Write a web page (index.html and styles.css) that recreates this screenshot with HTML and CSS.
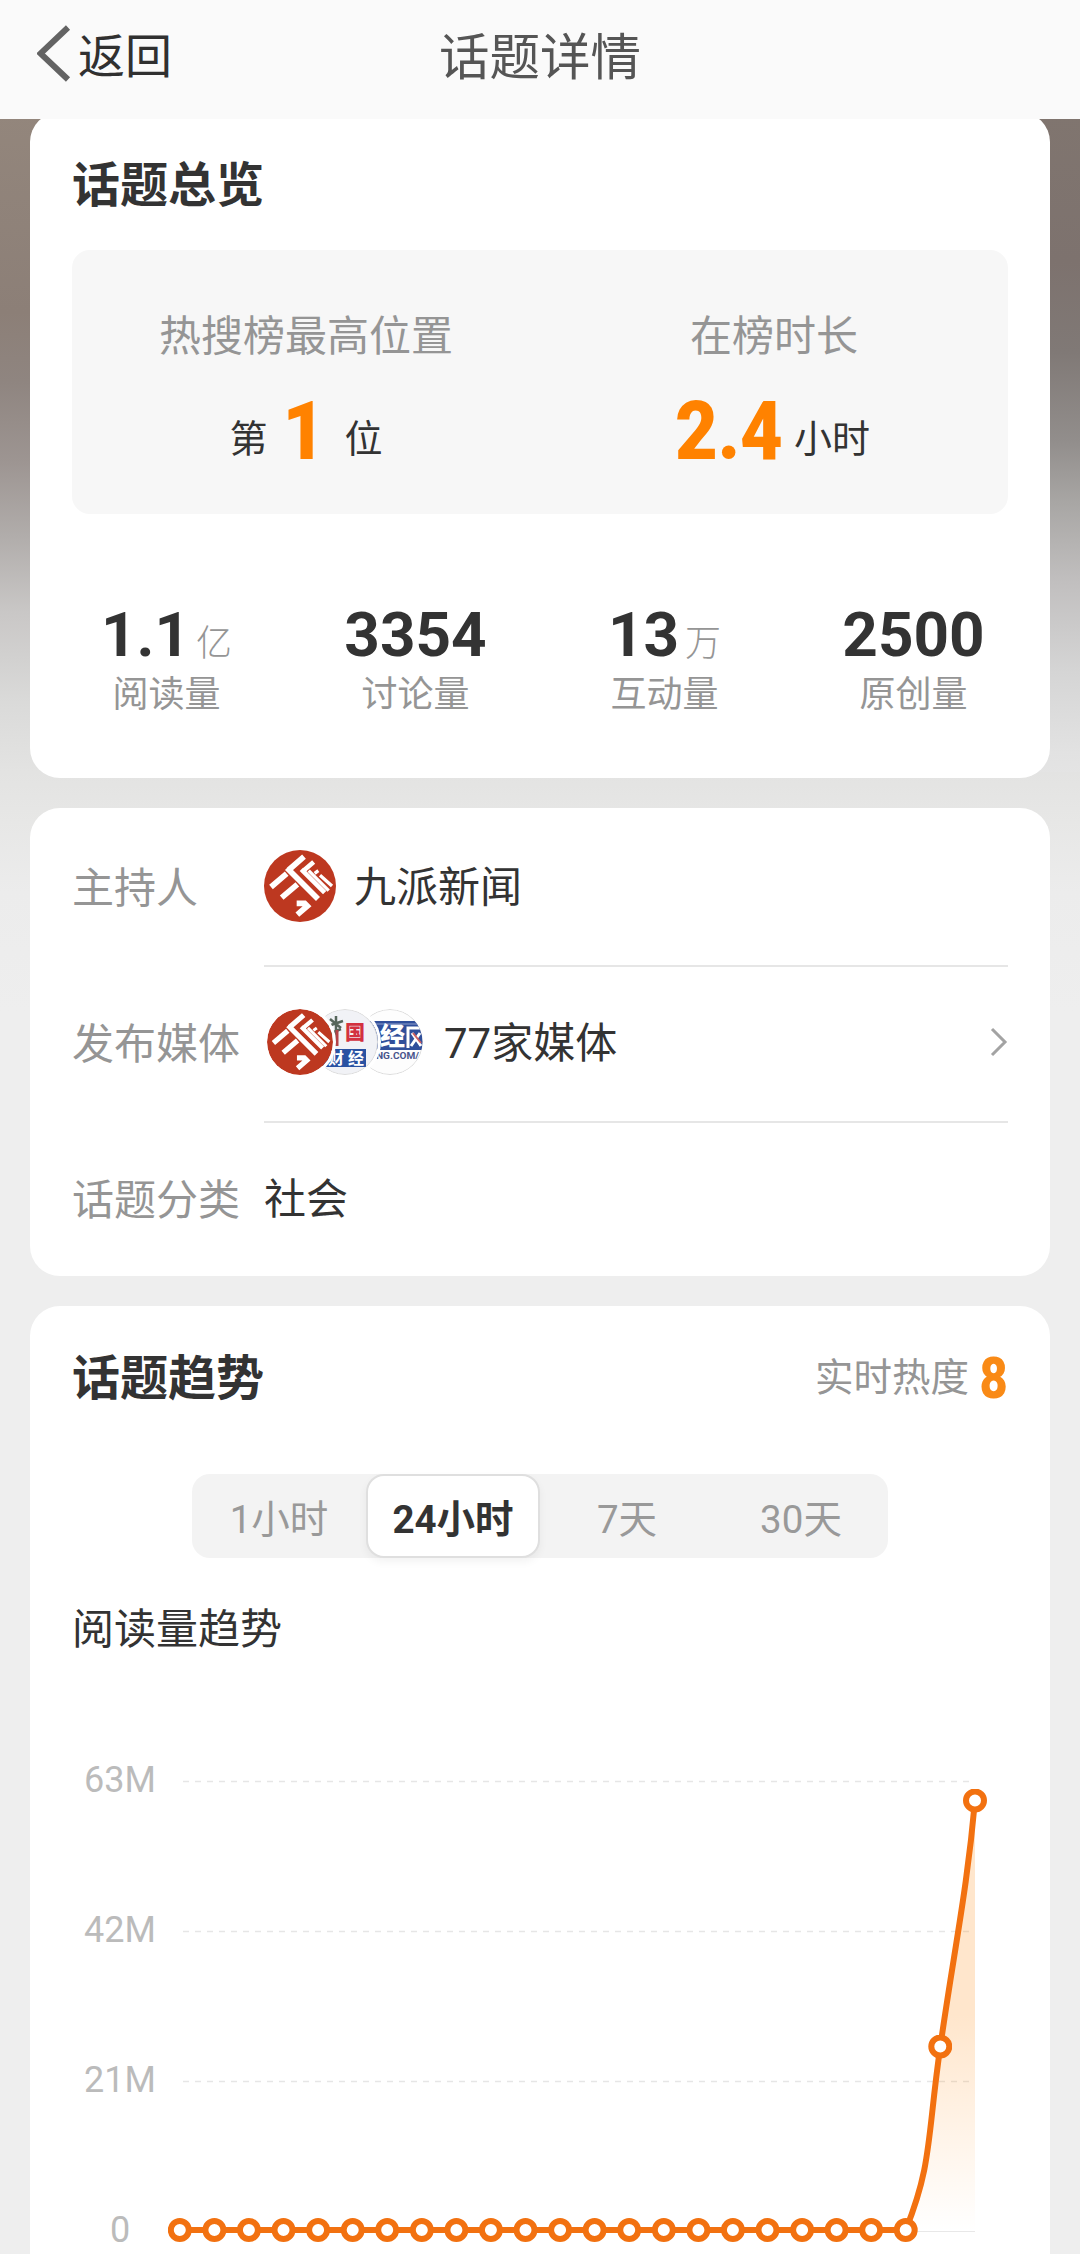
FILE: index.html
```html
<!DOCTYPE html>
<html lang="zh-CN">
<head>
<meta charset="utf-8">
<title>话题详情</title>
<link rel="stylesheet" href="styles.css">
</head>
<body>
<svg class="defs" width="0" height="0" aria-hidden="true">
  <symbol id="jiupai" viewBox="0 0 216 216">
    <circle cx="108" cy="108" r="108" fill="#bd3820"/>
    <g fill="none" stroke="#fff" stroke-width="17">
      <path d="M120 20L74 60M69 54L162 147"/>
      <path d="M68 71L21 111M100 103L53 143"/>
      <path stroke-width="14" d="M149 36L114 66M112 58L182 128"/>
      <path stroke-width="10" d="M134 62L194 122M152 70L163 62M168 76L204 108"/>
      <path d="M98 160L122 160L130 168L100 194"/>
    </g>
  </symbol>
</svg>
<header class="navbar">
  <a class="back">
    <svg class="back-icon" viewBox="0 0 34 58"><path d="M31 2.500L3.500 28.500L31 54.500" fill="none" stroke="#636363" stroke-width="6"/></svg>
    <span>返回</span>
  </a>
  <h1 class="nav-title">话题详情</h1>
</header>
<main class="page">
  <section class="card overview">
    <h2 class="card-title">话题总览</h2>
    <div class="highlight">
      <div class="highlight-item">
        <div class="highlight-label">热搜榜最高位置</div>
        <div class="highlight-value"><span class="unit">第</span><span class="big big-rank"><b>1</b></span><span class="unit">位</span></div>
      </div>
      <div class="highlight-item">
        <div class="highlight-label">在榜时长</div>
        <div class="highlight-value"><span class="big big-hours"><b>2.4</b></span><span class="unit">小时</span></div>
      </div>
    </div>
    <div class="stats">
      <div class="stat"><div class="stat-num">1.1<small>亿</small></div><div class="stat-label">阅读量</div></div>
      <div class="stat"><div class="stat-num">3354</div><div class="stat-label">讨论量</div></div>
      <div class="stat"><div class="stat-num">13<small>万</small></div><div class="stat-label">互动量</div></div>
      <div class="stat"><div class="stat-num">2500</div><div class="stat-label">原创量</div></div>
    </div>
  </section>

  <section class="card info">
    <div class="row">
      <div class="row-label">主持人</div>
      <div class="row-body lined">
        <svg class="avatar"><use href="#jiupai"/></svg>
        <span class="host-name">九派新闻</span>
      </div>
    </div>
    <div class="row">
      <div class="row-label">发布媒体</div>
      <div class="row-body lined">
        <div class="avatars">
          <svg class="mini first"><use href="#jiupai"/></svg>
          <svg class="mini second" viewBox="0 0 66 66">
            <defs><clipPath id="round"><circle cx="33" cy="33" r="32.500"/></clipPath></defs>
            <circle cx="33" cy="33" r="32.500" fill="#f1f2f6" stroke="#dcdcdc"/>
            <g clip-path="url(#round)">
              <path d="M24 7V37M16 17L31 12M17 25L29 20M18 10L29 19" stroke="#56665b" stroke-width="2.500" fill="none"/>
              <path d="M25 21V37" stroke="#b44247" stroke-width="3"/>
              <text x="33" y="31" class="logo-red">国</text>
              <rect x="10" y="40" width="44" height="18" fill="#2a52a2"/>
              <text x="16" y="55" class="logo-white">财</text><text x="36" y="55" class="logo-white">经</text>
            </g>
          </svg>
          <svg class="mini third" viewBox="0 0 66 66">
            <circle cx="33" cy="33" r="32.500" fill="#fdfdfd" stroke="#dcdcdc"/>
            <g clip-path="url(#round)">
              <rect x="10" y="12" width="56" height="29" fill="#304f9b"/>
              <path d="M10 15H66" stroke="#8fa0cd" stroke-width="1"/>
              <text x="23" y="36" class="logo-net">经</text>
              <path d="M51 39V19H68M55 24L64 37M63 24L54 37" fill="none" stroke="#fff" stroke-width="3"/>
              <path d="M56 24L64 34" stroke="#cf5f5f" stroke-width="2"/>
              <text x="19" y="50" class="logo-url" textLength="43" lengthAdjust="spacingAndGlyphs">NG.COM/</text>
            </g>
          </svg>
        </div>
        <span class="media-count">77家媒体</span>
        <svg class="chevron" viewBox="0 0 18 30"><path d="M2 2L15 15L2 28" fill="none" stroke="#a3a3a3" stroke-width="3"/></svg>
      </div>
    </div>
    <div class="row">
      <div class="row-label">话题分类</div>
      <div class="row-body"><span>社会</span></div>
    </div>
  </section>

  <section class="card trend">
    <div class="trend-head">
      <h2 class="card-title">话题趋势</h2>
      <div class="heat">实时热度<span class="heat-num"><b>8</b></span></div>
    </div>
    <div class="tabs">
      <span class="tab">1小时</span>
      <span class="tab active">24小时</span>
      <span class="tab">7天</span>
      <span class="tab">30天</span>
    </div>
    <h3 class="chart-title">阅读量趋势</h3>
    <svg class="chart" viewBox="30 1720 1020 534">
      <defs>
        <linearGradient id="fill" gradientUnits="userSpaceOnUse" x1="0" y1="1800" x2="0" y2="2231">
          <stop offset="0" stop-color="#ff8200" stop-opacity=".2"/>
          <stop offset=".5" stop-color="#ff8200" stop-opacity=".2"/>
          <stop offset="1" stop-color="#ff8200" stop-opacity="0"/>
        </linearGradient>
        <marker id="dot" viewBox="0 0 24 24" refX="12" refY="12" markerWidth="24" markerHeight="24" markerUnits="userSpaceOnUse">
          <circle cx="12" cy="12" r="9" fill="#fff" stroke="#f27110" stroke-width="6"/>
        </marker>
      </defs>
      <g class="axis-label">
        <text x="120" y="1791.500">63M</text>
        <text x="120" y="1941.500">42M</text>
        <text x="120" y="2091.500">21M</text>
        <text x="120" y="2241.500">0</text>
      </g>
      <path class="grid" d="M183 1781.500H975M183 1931.500H975M183 2081.500H975"/>
      <path d="M180 2231.500H975" stroke="#e8e8e8"/>
      <path fill="url(#fill)" d="M905.700 2230C932 2164 926 2140 940.300 2046.500L975 1800.500V2231H905.700Z"/>
      <path fill="none" stroke="#f27110" stroke-width="6" d="M179.800 2230H905.700C932 2164 927 2140 940.300 2046.500C955 1945 967 1890 975 1800.500"/>
      <polyline fill="none" stroke="none" marker-start="url(#dot)" marker-mid="url(#dot)" marker-end="url(#dot)" points="179.800,2230 214.400,2230 248.900,2230 283.500,2230 318.100,2230 352.700,2230 387.200,2230 421.800,2230 456.400,2230 490.900,2230 525.500,2230 560.100,2230 594.600,2230 629.200,2230 663.800,2230 698.400,2230 732.900,2230 767.500,2230 802.100,2230 836.600,2230 871.200,2230 905.700,2230 940.300,2046.500 975,1800.500"/>
    </svg>
  </section>
</main>
</body>
</html>
```
FILE: styles.css
```css
* { box-sizing: border-box; }
body {
  margin: 0;
  width: 1080px;
  height: 2254px;
  overflow: hidden;
  display: flex;
  flex-direction: column;
  font-family: Roboto, "Noto Sans CJK SC", sans-serif;
  color: #333;
  background: #eee;
}
h1, h2, h3 { margin: 0; font-weight: 400; }
.defs { position: absolute; }

.navbar {
  flex: none;
  height: 119px;
  padding: 0 37px;
  display: grid;
  grid-template-columns: 1fr auto 1fr;
  background: #fafafa;
  z-index: 1;
}
.back { display: flex; align-items: center; gap: 7px; height: 107px; font-size: 47px; color: #303030; }
.back-icon { width: 34px; height: 58px; }
.back span { margin-top: -2px; }
.nav-title { line-height: 116px; font-size: 50.500px; color: #555; }

.page {
  flex: 1;
  display: flex;
  flex-direction: column;
  gap: 30px;
  margin-top: -7px;
  padding: 0 30px;
  background:
    linear-gradient(180deg, #80756f 0, #7d726e 150px, #807976 240px, #928e8c 330px, #a8a6a4 390px, #c1bfbf 470px, #d5d5d5 560px, #e2e2e2 640px, #e8e8e8 710px, #ededed 780px, #eee 900px) right 0 top 0 / 60px 660px no-repeat,
    linear-gradient(180deg, #93867c 0, #8c7f77 200px, #8f8580 270px, #9d9592 350px, #b1adab 425px, #c9c7c6 500px, #dadad9 590px, #e3e3e2 660px, #e7e7e6 710px, #ececec 780px, #eee 900px);
}
.card { flex: none; background: #fff; border-radius: 30px; }
.card-title { font-size: 48px; font-weight: 700; line-height: 60px; }

.overview { height: 666px; padding: 44px 42px 0; }
.highlight {
  height: 264px;
  margin-top: 34px;
  display: grid;
  grid-template-columns: 1fr 1fr;
  background: #f7f7f7;
  border-radius: 18px;
  text-align: center;
}
.highlight-label { margin-top: 57px; font-size: 42px; line-height: 60px; color: #959595; }
.highlight-value { display: flex; justify-content: center; align-items: center; margin-top: 22px; }
.unit { font-size: 38px; line-height: 56px; padding-top: 16px; }
.big { height: 84px; line-height: 84px; font-size: 82px; color: #ff8200; }
.big b, .heat-num b { display: inline-block; font-weight: 900; transform: scaleX(.9); }
.big-rank { width: 77px; }
.big-rank b { margin-left: -5px; }
.big-hours { width: 116px; text-align: left; }
.big-hours b { margin-left: -3px; transform-origin: 0 50%; }

.stats { display: grid; grid-template-columns: repeat(4, 249px); margin: 84px -30px 0; text-align: center; }
.stat-num { font-size: 62px; font-weight: 700; line-height: 74px; height: 74px; display: flex; justify-content: center; align-items: baseline; }
.stat-num small { font-size: 36px; font-weight: 300; color: #959595; margin-left: 6px; }
.stat-label { font-size: 36px; line-height: 44px; color: #959595; margin-top: 1px; }

.info { height: 468px; padding: 0 42px; }
.row { height: 156px; display: flex; font-size: 42px; line-height: 162px; }
.row-label { width: 192px; color: #959595; white-space: nowrap; }
.row-body { flex: 1; height: 156px; display: flex; align-items: center; }
.row-body span { line-height: 60px; padding-top: 4px; }
.lined { height: 159px; padding-bottom: 2px; border-bottom: 2px solid #e6e6e6; }
.avatar { width: 72px; height: 72px; margin-right: 18px; }
.avatars { display: flex; width: 162px; margin-right: 18px; padding-left: 3px; isolation: isolate; }
.mini { flex: none; width: 66px; height: 66px; margin-right: -21px; border-radius: 50%; }
.first { z-index: 3; box-shadow: 0 0 0 3px #fff; }
.second { z-index: 2; box-shadow: 0 0 0 3px #fff; }
.chevron { width: 18px; height: 30px; margin-left: auto; }
.logo-red { font-size: 20px; font-weight: 900; fill: #d3313f; }
.logo-white { font-size: 16px; font-weight: 700; fill: #fff; }
.logo-net { font-size: 25px; font-weight: 900; fill: #fff; }
.logo-url { font-size: 9px; font-weight: 700; fill: #49548c; }

.trend { height: 1000px; }
.trend-head { display: flex; justify-content: space-between; height: 168px; padding: 43px 42px 0; }
.heat { display: flex; font-size: 38.500px; line-height: 58px; color: #959595; }
.heat-num { width: 39px; font-size: 58px; line-height: 58px; color: #f98a16; text-align: right; }
.heat-num b { transform: scaleX(.84); transform-origin: 100% 50%; }
.tabs {
  width: 696px;
  height: 84px;
  margin: 0 auto;
  display: grid;
  grid-template-columns: repeat(4, 1fr);
  background: #f3f3f3;
  border-radius: 18px;
  font-size: 38.500px;
  line-height: 91px;
  text-align: center;
  color: #999;
}
.tab { height: 84px; }
.active { background: #fff; border: 2px solid #dfdfdf; border-radius: 18px; line-height: 87px; font-weight: 700; color: #333; box-shadow: 0 4px 8px rgba(0, 0, 0, .05); }
.chart-title { font-size: 42px; line-height: 60px; padding-left: 42px; margin-top: 42px; }
.chart { display: block; width: 1020px; height: 534px; margin-top: 60px; }
.axis-label { font-size: 36px; fill: #bbb; text-anchor: middle; }
.grid { stroke: #e6e6e6; stroke-width: 1.500; stroke-dasharray: 6 6; }
```
